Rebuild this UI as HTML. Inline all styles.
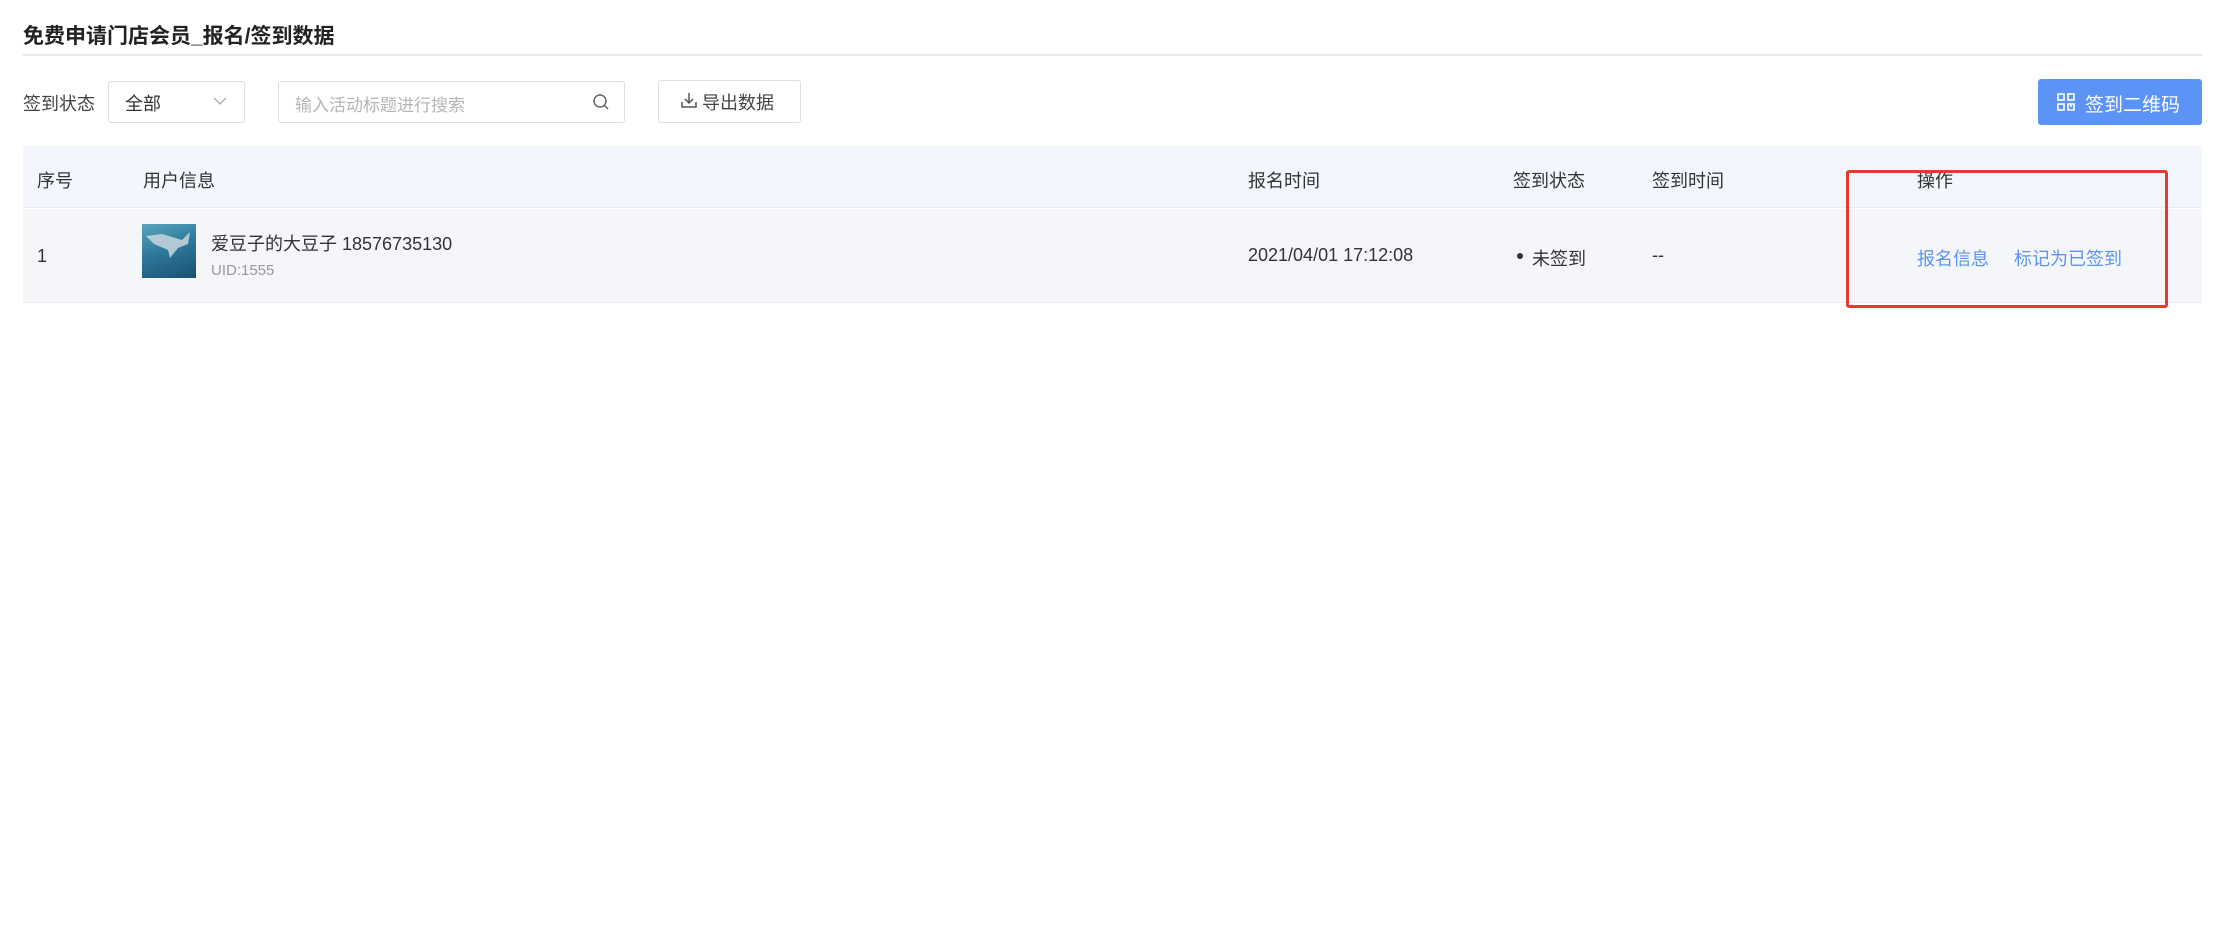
<!DOCTYPE html>
<html><head><meta charset="utf-8"><style>
*{margin:0;padding:0;box-sizing:border-box}
body{width:2224px;height:952px;background:#fff;font-family:"Liberation Sans","Noto Sans CJK SC",sans-serif;color:#333;position:relative;overflow:hidden}
.a{position:absolute;white-space:nowrap}
</style></head><body>
<div class="a" style="left:23px;top:20px;font-size:21px;font-weight:bold;color:#222">免费申请门店会员_报名/签到数据</div>
<div class="a" style="left:23px;top:54px;width:2179px;height:2px;background:#e8e8e8"></div>

<div class="a" style="left:23px;top:90px;font-size:18px;color:#444">签到状态</div>
<div class="a" style="left:108px;top:81px;width:137px;height:42px;border:1px solid #dcdfe6;border-radius:3px"></div>
<div class="a" style="left:125px;top:90px;font-size:18px;color:#333">全部</div>
<svg class="a" style="left:213px;top:96px" width="14" height="10"><path d="M1 2 L7 8 L13 2" fill="none" stroke="#aaa" stroke-width="1.3"/></svg>

<div class="a" style="left:278px;top:81px;width:347px;height:42px;border:1px solid #dcdfe6;border-radius:3px"></div>
<div class="a" style="left:295px;top:91px;font-size:17px;color:#b5b5b5">输入活动标题进行搜索</div>
<svg class="a" style="left:592px;top:93px" width="18" height="18"><circle cx="8" cy="8" r="6" fill="none" stroke="#666" stroke-width="1.5"/><path d="M12.5 12.5 L16 16" stroke="#666" stroke-width="1.5"/></svg>

<div class="a" style="left:658px;top:80px;width:143px;height:43px;border:1px solid #dcdfe6;border-radius:3px"></div>
<svg class="a" style="left:680px;top:91px" width="18" height="18"><path d="M9 2 V12 M5 8 L9 12 L13 8 M2 11 V16 H16 V11" fill="none" stroke="#555" stroke-width="1.5"/></svg>
<div class="a" style="left:702px;top:89px;font-size:18px;color:#444">导出数据</div>

<div class="a" style="left:2038px;top:79px;width:164px;height:46px;background:#5b93f7;border-radius:3px"></div>
<svg class="a" style="left:2057px;top:93px" width="18" height="18"><g fill="none" stroke="#fff" stroke-width="1.6"><rect x="1" y="1" width="6" height="6"/><rect x="11" y="1" width="6" height="6"/><rect x="1" y="11" width="6" height="6"/><path d="M11 11 H17 V17 H11 Z M14 11 V14"/></g></svg>
<div class="a" style="left:2085px;top:90px;font-size:19px;color:#fff">签到二维码</div>

<div class="a" style="left:23px;top:146px;width:2179px;height:62px;background:#f3f6fc;border-bottom:1px solid #e8ebf0"></div>
<div class="a" style="left:23px;top:209px;width:2179px;height:94px;background:#f5f6f9;border-bottom:1px solid #e8ebf0"></div>
<div class="a" style="left:37px;top:167px;font-size:18px">序号</div>
<div class="a" style="left:143px;top:167px;font-size:18px">用户信息</div>
<div class="a" style="left:1248px;top:167px;font-size:18px">报名时间</div>
<div class="a" style="left:1513px;top:167px;font-size:18px">签到状态</div>
<div class="a" style="left:1652px;top:167px;font-size:18px">签到时间</div>
<div class="a" style="left:1917px;top:167px;font-size:18px">操作</div>

<div class="a" style="left:37px;top:246px;font-size:18px">1</div>
<div class="a" style="left:142px;top:224px;width:54px;height:54px;background:linear-gradient(160deg,#5aa6bf 0%,#2e7a9c 45%,#1b4f70 100%)"></div>
<svg class="a" style="left:142px;top:224px" width="54" height="54"><path d="M4 12 L20 10 L40 16 L48 8 L46 20 L36 24 L28 34 L26 26 L12 20 Z" fill="#c9d6dc" opacity=".85"/></svg>
<div class="a" style="left:211px;top:230px;font-size:18px">爱豆子的大豆子 18576735130</div>
<div class="a" style="left:211px;top:262px;font-size:15px;color:#999">UID:1555</div>
<div class="a" style="left:1248px;top:245px;font-size:18px">2021/04/01 17:12:08</div>
<div class="a" style="left:1517px;top:253px;width:6px;height:6px;border-radius:50%;background:#333"></div>
<div class="a" style="left:1532px;top:245px;font-size:18px">未签到</div>
<div class="a" style="left:1652px;top:245px;font-size:18px">--</div>
<div class="a" style="left:1917px;top:245px;font-size:18px;color:#5b93f7">报名信息</div>
<div class="a" style="left:2014px;top:245px;font-size:18px;color:#5b93f7">标记为已签到</div>

<div class="a" style="left:1846px;top:170px;width:322px;height:138px;border:3px solid #e53a2f;border-radius:3px"></div>
</body></html>
